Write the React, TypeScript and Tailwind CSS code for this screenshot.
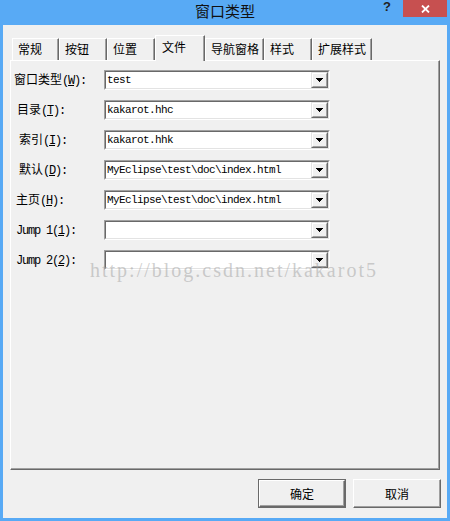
import React from "react";

const MONO = "font-['Liberation_Mono','Noto_Sans_CJK_SC',monospace] text-[11px] tracking-[-0.6px]";
const LABEL_MONO = "font-['Liberation_Mono','Noto_Sans_CJK_SC',monospace] text-[12px] tracking-[-1.2px]";

const tabs = [
  { label: "常规", w: "w-[47px]" },
  { label: "按钮", w: "w-[48px]" },
  { label: "位置", w: "w-[48px]" },
  { label: "文件", w: "w-[50px]", active: true },
  { label: "导航窗格", w: "w-[59px]" },
  { label: "样式", w: "w-[48px]" },
  { label: "扩展样式", w: "w-[60px]" },
];

const rows = [
  { zh: "窗口类型", key: "W", pl: "pl-[3px]", value: "test" },
  { zh: "目录", key: "T", pl: "pl-[6px]", value: "kakarot.hhc" },
  { zh: "索引", key: "I", pl: "pl-[8px]", value: "kakarot.hhk" },
  { zh: "默认", key: "D", pl: "pl-[8px]", value: "MyEclipse\\test\\doc\\index.html" },
  { zh: "主页", key: "H", pl: "pl-[5px]", value: "MyEclipse\\test\\doc\\index.html" },
  { zh: "", jump: "Jump 1", key: "1", pl: "pl-[5px]", value: "" },
  { zh: "", jump: "Jump 2", key: "2", pl: "pl-[5px]", value: "" },
];

function TitleBar() {
  return (
    <div className="h-[25px] grid grid-cols-[1fr_auto_1fr]">
      <div />
      <div className="text-[15px] leading-[22px] text-[#111]">窗口类型</div>
      <div className="flex justify-end items-start">
        <span className="mr-[12px] mt-[-1px] font-['Liberation_Sans',sans-serif] font-bold text-[13px] leading-[16px] text-[#222]">
          ?
        </span>
        <div className="w-[44px] h-[17px] mr-[3px] bg-[#c75050] flex items-center justify-center">
          <svg width="9" height="8" viewBox="0 0 9 8">
            <path d="M1 0.5 L8 7.5 M8 0.5 L1 7.5" stroke="#fff" strokeWidth="1.8" />
          </svg>
        </div>
      </div>
    </div>
  );
}

function DropArrow() {
  return (
    <div className="w-[17px] h-[16px] border border-t-[#e3e3e3] border-l-[#e3e3e3] border-r-[#696969] border-b-[#696969]">
      <div className="w-full h-full border border-t-white border-l-white border-r-[#a0a0a0] border-b-[#a0a0a0] bg-[#f0f0f0] flex items-center justify-center">
        <svg width="7" height="4" viewBox="0 0 7 4" shapeRendering="crispEdges">
          <rect x="0" y="0" width="7" height="1" fill="#000" />
          <rect x="1" y="1" width="5" height="1" fill="#000" />
          <rect x="2" y="2" width="3" height="1" fill="#000" />
          <rect x="3" y="3" width="1" height="1" fill="#000" />
        </svg>
      </div>
    </div>
  );
}

function Combo({ value }: { value: string }) {
  return (
    <div className="w-[226px] h-[20px] border border-t-[#a0a0a0] border-l-[#a0a0a0] border-r-white border-b-white">
      <div className="h-full border border-t-[#696969] border-l-[#696969] border-r-[#e3e3e3] border-b-[#e3e3e3] bg-white flex">
        <span className={`flex-1 pl-[1px] leading-[16px] whitespace-nowrap overflow-hidden ${MONO}`}>{value}</span>
        <DropArrow />
      </div>
    </div>
  );
}

function Label({ zh, jump, k }: { zh: string; jump?: string; k: string }) {
  return (
    <span className="whitespace-nowrap">
      {zh && <span>{zh}</span>}
      <span className={LABEL_MONO}>
        {jump ? `${jump}(` : "("}
        <span className="underline underline-offset-[1px]">{k}</span>
        ):
      </span>
    </span>
  );
}

function Btn({ children, def }: { children: React.ReactNode; def?: boolean }) {
  const face = (
    <div className="h-full border border-t-white border-l-white border-r-[#696969] border-b-[#696969] shadow-[inset_-1px_-1px_0_#a0a0a0] bg-[#f0f0f0] flex items-center justify-center text-[12px]">
      {children}
    </div>
  );
  return def ? (
    <div className="w-[88px] h-[29px] border border-[#6a6a6a]">{face}</div>
  ) : (
    <div className="w-[88px] h-[29px]">{face}</div>
  );
}

export default function App() {
  return (
    <div className="w-[450px] h-[521px] bg-[#58aaf5] flex flex-col font-['Noto_Sans_CJK_SC',sans-serif] text-black overflow-hidden">
      <TitleBar />
      <div className="flex-1 mx-[3px] mb-[3px] bg-[#f0f0f0] flex flex-col">
        <div className="ml-[7px] w-[430px] mt-[10px]">
          <div className="h-[25px] flex items-end pl-[2px]">
            {tabs.map((t) =>
              t.active ? (
                <div
                  key={t.label}
                  className={`${t.w} h-[26px] -mb-[1px] relative z-10 bg-[#f0f0f0] border-t border-l border-t-white border-l-white border-r border-r-[#696969] shadow-[inset_-1px_0_0_#a0a0a0] pl-[6px] text-[12px] leading-[21px]`}
                >
                  {t.label}
                </div>
              ) : (
                <div
                  key={t.label}
                  className={`${t.w} h-[22px] bg-[#f0f0f0] border-t border-l border-t-white border-l-white border-r border-r-[#696969] shadow-[inset_-1px_0_0_#a0a0a0] pl-[5px] text-[12px] leading-[20px] whitespace-nowrap`}
                >
                  {t.label}
                </div>
              )
            )}
          </div>
          <div className="h-[410px] relative border border-t-white border-l-white border-r-[#696969] border-b-[#696969] shadow-[inset_-1px_-1px_0_#a0a0a0] pt-[9px] flex flex-col gap-[10px]">
            {rows.map((r) => (
              <div key={r.key} className="flex items-center h-[20px]">
                <div className={`w-[93px] text-[12px] leading-[16px] ${r.pl}`}>
                  <Label zh={r.zh} jump={r.jump} k={r.key} />
                </div>
                <Combo value={r.value} />
              </div>
            ))}
            <div className="absolute left-[79px] top-[199px] font-['Liberation_Serif',serif] text-[20px] leading-[20px] tracking-[2px] text-[rgba(160,160,160,0.5)] pointer-events-none whitespace-nowrap">
              http://blog.csdn.net/kakarot5
            </div>
          </div>
        </div>
        <div className="flex justify-end gap-[7px] mt-[9px] mr-[6px]">
          <Btn def>确定</Btn>
          <Btn>取消</Btn>
        </div>
      </div>
    </div>
  );
}
